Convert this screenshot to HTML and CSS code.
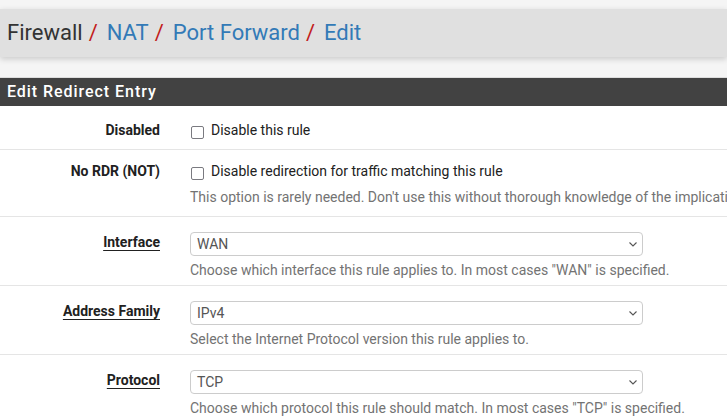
FILE: index.html
```html
<!DOCTYPE html>
<html>
<head>
<meta charset="utf-8">
<link rel="stylesheet" href="styles.css">
</head>
<body>
<div class="top-gap"></div>
<header class="crumbs">
  <h1>
    <span class="crumb first">Firewall</span>
    <a class="crumb">NAT</a>
    <a class="crumb">Port Forward</a>
    <a class="crumb">Edit</a>
  </h1>
</header>
<section class="panel">
  <div class="panel-heading">Edit Redirect Entry</div>
  <div class="panel-body">
    <div class="row row-first">
      <div class="label">Disabled</div>
      <div class="control">
        <label class="check"><span class="box"></span>Disable this rule</label>
      </div>
    </div>
    <div class="row row-check">
      <div class="label">No RDR (NOT)</div>
      <div class="control">
        <label class="check"><span class="box"></span>Disable redirection for traffic matching this rule</label>
        <div class="help">This option is rarely needed. Don't use this without thorough knowledge of the implications.</div>
      </div>
    </div>
    <div class="row row-select">
      <div class="label"><span class="ul">Interface</span></div>
      <div class="control">
        <div class="select"><span>WAN</span><svg class="chev" viewBox="0 0 8 5" width="8" height="5"><path d="M0.5 0.5 L4 4 L7.5 0.5" fill="none" stroke="#555" stroke-width="1.1"/></svg></div>
        <div class="help">Choose which interface this rule applies to. In most cases "WAN" is specified.</div>
      </div>
    </div>
    <div class="row row-select">
      <div class="label"><span class="ul">Address Family</span></div>
      <div class="control">
        <div class="select"><span>IPv4</span><svg class="chev" viewBox="0 0 8 5" width="8" height="5"><path d="M0.5 0.5 L4 4 L7.5 0.5" fill="none" stroke="#555" stroke-width="1.1"/></svg></div>
        <div class="help">Select the Internet Protocol version this rule applies to.</div>
      </div>
    </div>
    <div class="row row-select">
      <div class="label"><span class="ul">Protocol</span></div>
      <div class="control">
        <div class="select"><span>TCP</span><svg class="chev" viewBox="0 0 8 5" width="8" height="5"><path d="M0.5 0.5 L4 4 L7.5 0.5" fill="none" stroke="#555" stroke-width="1.1"/></svg></div>
        <div class="help">Choose which protocol this rule should match. In most cases "TCP" is specified.</div>
      </div>
    </div>
  </div>
</section>
</body>
</html>
```
FILE: styles.css
```css
* { box-sizing: border-box; }
html, body { margin: 0; padding: 0; }
body {
  background: #f5f5f5;
  font-family: Roboto, "Liberation Sans", sans-serif;
  font-size: 14px;
  color: #212121;
  overflow: hidden;
  width: 727px;
}
.top-gap { height: 9px; }
.crumbs {
  background: #e0e0e0;
  height: 48px;
  box-shadow: 0 2px 6px rgba(0,0,0,0.18);
  display: flex;
  align-items: center;
  padding-left: 7px;
}
.crumbs h1 {
  margin: 0;
  font-size: 22px;
  font-weight: 400;
  line-height: 26px;
  white-space: nowrap;
  display: flex;
}
.crumb { color: #337ab7; }
.crumb.first { color: #333; }
.crumb + .crumb::before {
  content: "/";
  color: #c21c1c;
  padding: 0 9px 0 6px;
}
.panel {
  margin-top: 20px;
  border-top: 1px solid #ddd;
}
.panel-heading {
  background: #424242;
  color: #fff;
  height: 28px;
  line-height: 28px;
  padding-left: 7px;
  font-size: 16px;
  font-weight: 500;
  letter-spacing: 0.95px;
}
.panel-body { background: #fff; }
.row {
  display: flex;
  border-bottom: 1px solid #e5e5e5;
}
.row-first { padding: 14px 0 9px; }
.row-check { padding: 11px 0 9px; }
.row-select { padding: 15px 0 5px; }
.label {
  width: 160px;
  text-align: right;
  font-weight: 700;
  color: #212121;
  line-height: 20px;
  flex: none;
}
.ul {
  text-decoration: underline;
  text-underline-offset: 3px;
  text-decoration-thickness: 1px;
}
.control {
  margin-left: 30px;
  flex: 1;
  white-space: nowrap;
}
.check {
  display: flex;
  align-items: flex-start;
  line-height: 20px;
  color: #212121;
}
.box {
  display: inline-block;
  width: 13px;
  height: 13px;
  border: 1px solid #7a7a80;
  border-radius: 2px;
  background: #fff;
  margin: 6px 7px 0 1px;
}
.help {
  color: #737373;
  line-height: 20px;
  margin-top: 6px;
}
.select {
  width: 453px;
  height: 24px;
  border: 1px solid #ccc;
  border-radius: 4px;
  background: #fff;
  display: flex;
  align-items: center;
  justify-content: space-between;
  padding: 0 5px 0 6px;
  color: #555;
}
.row-select .help { margin-top: 4px; }
```
